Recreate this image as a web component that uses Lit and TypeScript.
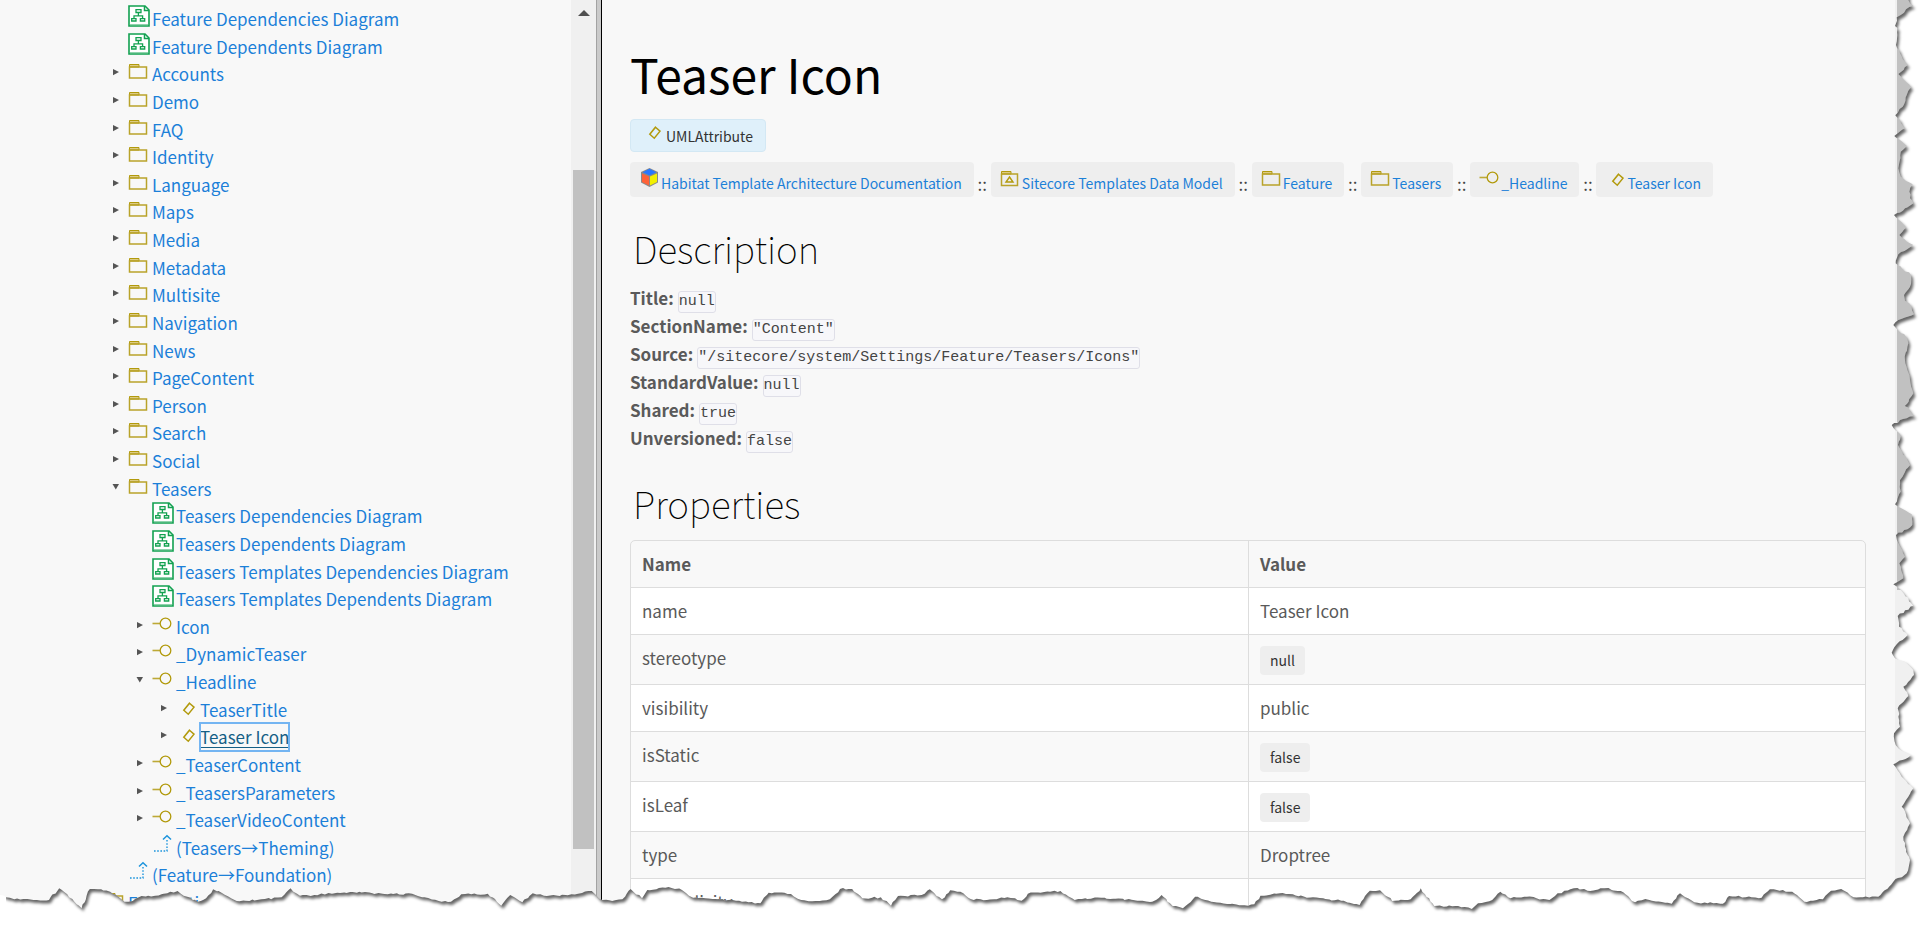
import { LitElement, html, svg, css, nothing } from "lit";
import { customElement, property } from "lit/decorators.js";
import { classMap } from "lit/directives/class-map.js";

type IconName = "diagram" | "folder" | "model" | "interface" | "attribute" | "dependency" | "cube";

interface TreeNode {
  label: string;
  icon: IconName;
  state?: "open" | "closed";
  current?: boolean;
  children?: TreeNode[];
}

const folder = (label: string): TreeNode => ({ label, icon: "folder", state: "closed" });
const diagram = (label: string): TreeNode => ({ label, icon: "diagram" });
const iface = (label: string): TreeNode => ({ label, icon: "interface", state: "closed" });

const FEATURE: TreeNode[] = [
  diagram("Feature Dependencies Diagram"),
  diagram("Feature Dependents Diagram"),
  ...["Accounts", "Demo", "FAQ", "Identity", "Language", "Maps", "Media", "Metadata", "Multisite",
    "Navigation", "News", "PageContent", "Person", "Search", "Social"].map(folder),
  {
    label: "Teasers",
    icon: "folder",
    state: "open",
    children: [
      diagram("Teasers Dependencies Diagram"),
      diagram("Teasers Dependents Diagram"),
      diagram("Teasers Templates Dependencies Diagram"),
      diagram("Teasers Templates Dependents Diagram"),
      iface("Icon"),
      iface("_DynamicTeaser"),
      {
        label: "_Headline",
        icon: "interface",
        state: "open",
        children: [
          { label: "TeaserTitle", icon: "attribute", state: "closed" },
          { label: "Teaser Icon", icon: "attribute", state: "closed", current: true },
        ],
      },
      iface("_TeaserContent"),
      iface("_TeasersParameters"),
      iface("_TeaserVideoContent"),
      { label: "(Teasers→Theming)", icon: "dependency" },
    ],
  },
  { label: "(Feature→Foundation)", icon: "dependency" },
];

const CRUMBS: { label: string; icon: IconName }[] = [
  { label: "Habitat Template Architecture Documentation", icon: "cube" },
  { label: "Sitecore Templates Data Model", icon: "model" },
  { label: "Feature", icon: "folder" },
  { label: "Teasers", icon: "folder" },
  { label: "_Headline", icon: "interface" },
  { label: "Teaser Icon", icon: "attribute" },
];

const FACTS: [string, string][] = [
  ["Title", "null"],
  ["SectionName", '"Content"'],
  ["Source", '"/sitecore/system/Settings/Feature/Teasers/Icons"'],
  ["StandardValue", "null"],
  ["Shared", "true"],
  ["Unversioned", "false"],
];

const PROPERTIES: { name: string; value: string; chip?: boolean }[] = [
  { name: "name", value: "Teaser Icon" },
  { name: "stereotype", value: "null", chip: true },
  { name: "visibility", value: "public" },
  { name: "isStatic", value: "false", chip: true },
  { name: "isLeaf", value: "false", chip: true },
  { name: "type", value: "Droptree" },
  { name: "multiplicity", value: "" },
];

const GLYPHS = {
  diagram: svg`
    <path d="M1 1H17L21 5V21H1Z" fill="#fff" stroke="#12a150" stroke-width="1.6"/>
    <path d="M2 19.5H20" stroke="#8fd3ac" fill="none"/>
    <path d="M16.5 1V5.5H21" fill="none" stroke="#12a150" stroke-width="1.5"/>
    <path d="M8 4.7H13V7.5H8ZM3.7 13.6H8V16H3.7ZM12.4 13.6H16.7V16H12.4ZM10.4 7.5V10.6M6 13.6V10.8H14.6V13.6" fill="none" stroke="#12a150" stroke-width="1.3"/>`,
  folder: svg`
    <path d="M1.5 4.5H11V7H1.5Z" fill="#dccb84" stroke="#b29a0c"/>
    <path d="M1.5 7H18.5V18H1.5Z" fill="none" stroke="#b9a32a" stroke-width="1.5"/>`,
  model: svg`
    <path d="M1.5 4.5H11V7H1.5Z" fill="#dccb84" stroke="#b29a0c"/>
    <path d="M1.5 7H17.5V18.5H1.5Z" fill="none" stroke="#b9a32a" stroke-width="1.5"/>
    <path d="M9.5 10L13 15H6Z" fill="none" stroke="#b29a0c" stroke-width="1.4"/>`,
  interface: svg`
    <path d="M0.5 10.5H8" stroke="#bda936" stroke-width="1.6"/>
    <circle cx="13.5" cy="10.5" r="5.3" fill="none" stroke="#b29a0c" stroke-width="1.3"/>`,
  attribute: svg`
    <path d="M13.5 7.2L18 11.2L12.3 18.2L7.8 14.2Z" fill="none" stroke="#b29a0c" stroke-width="1.5"/>`,
  dependency: svg`
    <path d="M2 17H15V5" fill="none" stroke="#1c94dc" stroke-width="1.4" stroke-dasharray="1.6 1.6"/>
    <path d="M11 5.5L15 1.7L19 5.5" fill="none" stroke="#1c94dc" stroke-width="1.5"/>`,
  cube: svg`
    <path d="M10.5 1L19 5V15.5L10.5 20L2 15.5V5Z" fill="#8a8a8a"/>
    <path d="M10.5 1.8L17.4 5.3L10.5 8.6L3.6 5.3Z" fill="#2878ff"/>
    <path d="M3 6.6L10 9.6V18.6L3 15Z" fill="#ff6238"/>
    <path d="M18 6.6L11 9.6V18.6L18 15Z" fill="#f2f000"/>`,
};

@customElement("model-icon")
export class ModelIcon extends LitElement {
  static styles = css`
    :host { display: block; flex: none; width: 24px; height: 22px; }
    .glyph { display: block; overflow: visible; }
  `;
  @property() name: IconName = "folder";
  render() {
    return html`<svg class="glyph" width="24" height="22" viewBox="0 0 24 22" aria-hidden="true">${GLYPHS[this.name]}</svg>`;
  }
}

/* Outline of the torn sheet, down the right side and back along the bottom. */
const RIGHT_TOP = [235,0,250,17,228,28,222,38,200,52,201,62,195,78,203,85,198,135,210,160,218,178,233,195,205,222,222,240,243,262,230,285,218,320,196,346,225,385,193,408,230,438,212,455,205,505,212,530,248,553,238,575,240,595,250,610,225,625,192,645,228,683,208,705,250,735,205,763,197,790,243,825,240,860,222,885,225,902,238,910,252,943,205,960,190,975,205,992,228,1010,235,1030,224,1070,226,1090,240,1140,250,1180,224,1218,254,1248,230,1255,185,1275,212,1308,204,1335,232,1380];
const RIGHT_LOW = [240,15,210,60,212,95,195,133,245,163,247,195,198,225,205,250,225,290,208,310,220,355,190,373,215,393,250,437,203,468,207,500,233,525,200,553,185,578,195,595,230,610,250,630,252,645,220,680,235,708,203,745,210,800,192,820,197,855,215,872,243,885,190,913,215,950,250,985,228,1020,215,1040,240,1090,220,1130,228,1175,240,1200,230,1240,190,1265,145,1310];
const BOTTOM = [
  [0,90,15,97,35,103,120,105,145,70,165,88,200,130,220,72,240,73,270,80,290,95,305,110,325,108,340,97,380,92,410,85,435,78,450,92,485,110,505,100,522,73,545,85,580,108,640,103,690,97,712,70,735,92,770,90,820,85,880,80,950,88,1010,86,1040,97,1075,108,1105,110,1130,88,1195,86,1228,122,1250,90,1280,112,1305,85,1340,93,1400,88,1450,78,1475,105,1500,108,1525,103,1545,72],
  [5,100,18,75,70,66,103,75,120,92,130,98,160,100,200,103,250,110,295,115,315,83,370,87,395,105,430,108,465,103,490,72,520,72,545,100,590,97,615,122,632,93,690,90,710,73,740,103,760,76,785,80,810,102,850,105,900,97,935,107,950,86,1030,78,1065,105,1130,98,1255,110,1278,90,1305,123,1330,130,1360,95,1400,110,1490,122,1505,118,1520,92],
  [0,85,60,95,150,107,195,120,220,77,245,76,275,108,320,103,345,70,378,123,430,123,470,132,485,115,520,105,540,80,565,100,605,95,660,105,680,85,720,70,760,78,795,70,835,78,870,112,895,102,960,116,980,85,1015,112,1085,116,1100,93,1180,98,1200,73,1255,80,1285,110,1330,103,1350,77,1375,72,1405,97],
];

const place = (flat: number[], ox: number, oy: number, sx: number, sy: number): [number, number][] =>
  flat.reduce<[number, number][]>((out, v, i) => {
    if (i % 2 === 0) out.push([ox + v / sx, 0]);
    else out[out.length - 1][1] = oy + v / sy;
    return out;
  }, []);

/* Breaks each long edge into short steps with a small nick at every step. */
const roughen = (pts: [number, number][]): [number, number][] => {
  const out: [number, number][] = [];
  let seed = 7;
  const next = () => ((seed = (seed * 16807) % 2147483647) / 2147483647 - 0.5);
  pts.forEach(([x, y], i) => {
    out.push([x, y]);
    const to = pts[i + 1];
    if (!to) return;
    const steps = Math.floor(Math.hypot(to[0] - x, to[1] - y) / 3);
    for (let s = 1; s < steps; s++) {
      const t = s / steps;
      out.push([x + (to[0] - x) * t + next() * 1.6, y + (to[1] - y) * t + next() * 1.8]);
    }
  });
  return out;
};

const EDGE = roughen([
  ...place(RIGHT_TOP, 1830, 0, 3, 3),
  ...place(RIGHT_LOW, 1830, 460, 3, 3),
  ...BOTTOM.flatMap((part, i) => place(part, i * 640, 865, 2.45, 3)).sort((a, b) => b[0] - a[0]),
]).map(([x, y]) => `${x.toFixed(1)} ${y.toFixed(1)}`).join("L");
const SHEET = `M-20 -20L1908 -20L${EDGE}L-20 895Z`;
const OUTSIDE = `M-20 -20H1950V945H-20Z${SHEET}`;

@customElement("torn-edge")
export class TornEdge extends LitElement {
  static styles = css`
    :host { display: block; position: absolute; inset: 0; pointer-events: none; }
    .edge { display: block; width: 100%; height: 100%; }
  `;
  render() {
    return html`
      <svg class="edge" viewBox="0 0 1930 925" preserveAspectRatio="none" aria-hidden="true">
        <defs>
          <filter id="soft" x="-5%" y="-5%" width="110%" height="110%"><feGaussianBlur stdDeviation="1.8"/></filter>
          <clipPath id="outside"><path d=${OUTSIDE} clip-rule="evenodd"/></clipPath>
          <clipPath id="paper"><path d="M6 0H1930V925H6Z"/></clipPath>
        </defs>
        <g clip-path="url(#outside)">
          <path d="M0 0H1930V925H0Z" fill="#fff"/>
          <g clip-path="url(#paper)">
            <g filter="url(#soft)"><path d=${SHEET} fill="#000" fill-opacity="0.6" transform="translate(2 3)"/></g>
          </g>
        </g>
      </svg>`;
  }
}

@customElement("app-root")
export class AppRoot extends LitElement {
  static styles = css`
    :host {
      display: grid;
      grid-template-columns: 571px 25px 6px minmax(0, 1fr) 35px;
      position: relative;
      height: 100vh;
      overflow: hidden;
      background: #f8f8f8;
      color: #5a5a5a;
      font-family: "Noto Sans CJK SC", "Noto Sans CJK JP", sans-serif;
      font-size: 17px;
    }
    a { color: #1c80d8; text-decoration: none; }
    a:hover { text-decoration: underline; }

    .nav { overflow: hidden; padding: 5px 0 0 88px; line-height: 1.625; }
    .branch { list-style: none; margin: 0; padding: 0; }
    .branch.inner { padding-left: 24px; }
    .row { display: flex; align-items: flex-start; white-space: nowrap; }
    .toggle {
      flex: none; width: 16px; height: 24px; margin: 0; padding: 0;
      border: 0; background: none; display: flex; align-items: center;
    }
    .arrow { display: block; }
    .link.current {
      color: #155f86; text-decoration: underline; text-underline-offset: 3px;
      outline: 2px solid #74b5f2; outline-offset: -1px;
    }

    .track { background: #f0f0f0; padding: 0 2px; display: flex; flex-direction: column; }
    .step {
      flex: none; height: 26px; border: 0; padding: 0; background: none;
      display: flex; align-items: center; justify-content: center;
    }
    .thumb { background: #c1c1c1; }
    .nav-track .thumb { margin-top: 144px; height: 679px; }
    .page-track .thumb { height: 590px; }
    .splitter { border-left: 1px solid #a2a2a2; border-right: 1px solid #000; background: #cacaca; }

    .page { padding: 44px 29px 0 28px; overflow: hidden; }
    .title { margin: 0; font-size: 48px; line-height: 58px; font-weight: 400; color: #000; }
    .kind {
      display: inline-flex; align-items: flex-start; height: 31px; margin-top: 17px; padding: 0 12px 0 11px;
      border: 1px solid #d3e8f4; border-radius: 4px; background: #dff0fa;
      color: #333; font-size: 14px; line-height: 33px;
    }
    .crumbs {
      display: flex; flex-wrap: wrap; list-style: none; margin: 10px 0 0; padding: 0;
      font-size: 14px; line-height: 43px;
    }
    .crumb { display: flex; height: 35px; }
    .crumb + .crumb::before { content: "::"; width: 17px; text-align: center; color: #444; font-size: 17px; }
    .crumb-link { display: flex; padding: 0 12px 0 9px; border-radius: 4px; background: #eee; }
    .crumb-link model-icon { margin-top: 5px; width: 22px; }
    .heading {
      margin: 0; padding-left: 3px; font-size: 37px; line-height: 50px; font-weight: 100; color: #000;
      font-family: "Noto Sans CJK SC Thin", "Noto Sans CJK SC", sans-serif;
    }
    .about { margin-top: 26px; }
    .facts { margin: 11px 0 0; line-height: 28px; }
    .fact { display: flex; align-items: baseline; gap: 4px; height: 28px; }
    .fact-name { font-weight: 700; }
    .fact-value { margin: 0; display: flex; }
    .code {
      padding: 0; border: 1px solid #dfdfe8; border-radius: 3px; background: #f7f7fa;
      font: 15px/20px "Liberation Mono", monospace; color: #444;
    }
    .props { margin-top: 26px; }
    .table {
      width: 100%; margin-top: 12px; table-layout: fixed; border-collapse: separate; border-spacing: 0;
      border: 1px solid #ddd; border-radius: 5px; line-height: 24px;
    }
    .cell {
      box-sizing: border-box; height: 47px; padding: 11px 11px 0; text-align: left;
      vertical-align: top; border-top: 1px solid #ddd;
    }
    .cell + .cell { border-left: 1px solid #ddd; }
    .head .cell { height: 46px; border-top: 0; font-weight: 700; }
    .body .record:nth-child(odd) { background: #fff; }
    .body .record:nth-child(even) { background: #f9f9f9; }
    .tall .cell { height: 50px; padding-top: 11px; }
    .chip {
      display: block; width: fit-content; padding: 0 10px; border-radius: 4px; background: #eee;
      color: #333; font-size: 14px; line-height: 29px;
    }
  `;

  private branch(nodes: TreeNode[], inner = false): unknown {
    return html`<ul class=${classMap({ branch: true, inner })}>${nodes.map((n) => html`
      <li>
        <div class="row">${this.toggle(n)}<model-icon name=${n.icon}></model-icon
          ><a href="#" class=${classMap({ link: true, current: !!n.current })} aria-current=${n.current ? "page" : nothing}>${n.label}</a></div>
        ${n.children ? this.branch(n.children, true) : nothing}
      </li>`)}</ul>`;
  }

  private toggle(n: TreeNode) {
    if (!n.state) return html`<span class="toggle"></span>`;
    const open = n.state === "open";
    return html`<button class="toggle" type="button" aria-expanded=${open} aria-label=${n.label}>
      <svg class="arrow" width="10" height="8" viewBox="0 0 10 8"><path fill="#555" d=${open ? "M0.5 1H7L3.8 6.5Z" : "M1 1L7 4L1 7.2Z"}/></svg>
    </button>`;
  }

  render() {
    return html`
      <nav class="nav" aria-label="Model">
        ${this.branch(FEATURE, true)}
        ${this.branch([folder("Foundation")])}
      </nav>
      <div class="track nav-track">
        <button class="step" type="button" aria-label="Scroll up">
          <svg width="12" height="6" viewBox="0 0 12 6"><path d="M0 6L6 0L12 6Z" fill="#505050"/></svg>
        </button>
        <div class="thumb"></div>
      </div>
      <div class="splitter"></div>
      <main class="page">
        <h1 class="title">Teaser Icon</h1>
        <div class="kind"><model-icon name="attribute"></model-icon>UMLAttribute</div>
        <ol class="crumbs">
          ${CRUMBS.map((c) => html`<li class="crumb"><a class="crumb-link" href="#"><model-icon name=${c.icon}></model-icon>${c.label}</a></li>`)}
        </ol>
        <h2 class="heading about">Description</h2>
        <dl class="facts">
          ${FACTS.map(([k, v]) => html`<div class="fact"><dt class="fact-name">${k}:</dt><dd class="fact-value"><code class="code">${v}</code></dd></div>`)}
        </dl>
        <h2 class="heading props">Properties</h2>
        <table class="table">
          <thead class="head"><tr><th class="cell" scope="col">Name</th><th class="cell" scope="col">Value</th></tr></thead>
          <tbody class="body">
            ${PROPERTIES.map((p) => html`<tr class=${classMap({ record: true, tall: !!p.chip })}>
              <td class="cell">${p.name}</td>
              <td class="cell">${p.chip ? html`<span class="chip">${p.value}</span>` : p.value}</td>
            </tr>`)}
          </tbody>
        </table>
      </main>
      <div class="track page-track"><div class="thumb"></div></div>
      <torn-edge></torn-edge>`;
  }
}
